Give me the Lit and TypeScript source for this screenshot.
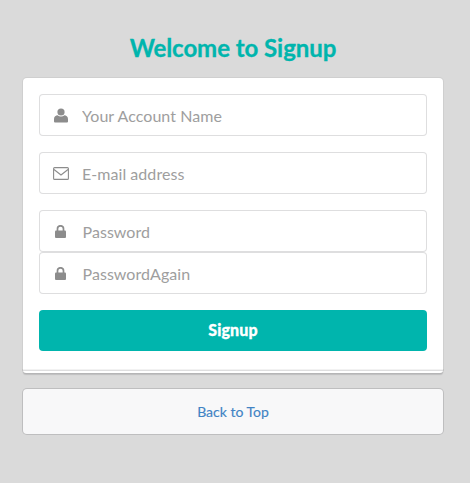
import { LitElement, html, css, svg } from "lit";
import { customElement } from "lit/decorators.js";

const userIcon = svg`<svg class="icon" viewBox="0 0 14 15" width="14" height="15"><circle cx="7" cy="4" r="3.6" fill="#8c8c8c"/><path d="M1 14.5 a1 1 0 0 1-1-1 V11 c0-2.6 2-3.8 3.6-3.8 C4.6 8 5.7 8.400 7 8.400 S9.400 8 10.400 7.200 C12 7.200 14 8.400 14 11 V13.500 a1 1 0 0 1-1 1Z" fill="#8c8c8c"/></svg>`;
const mailIcon = svg`<svg class="icon" viewBox="0 0 16 13" width="16" height="13"><rect x="0.6" y="0.6" width="14.800" height="11.800" rx="1" fill="none" stroke="#8c8c8c" stroke-width="1.100"/><path d="M1 2.500 L8 8 L15 2.500" fill="none" stroke="#8c8c8c" stroke-width="1.100"/></svg>`;
const lockIcon = svg`<svg class="icon" viewBox="0 0 11 13" width="11" height="13"><path d="M2.500 6 V3.800 a3 3 0 0 1 6 0 V6" fill="none" stroke="#8c8c8c" stroke-width="1.700"/><rect x="0" y="5.500" width="11" height="7.500" rx="1" fill="#8c8c8c"/></svg>`;

@customElement("app-root")
export class AppRoot extends LitElement {
  static styles = css`
    :host {
      display: block;
      height: 483px;
      background: #dadada;
      font-family: Lato, "Liberation Sans", sans-serif;
      box-sizing: border-box;
      padding: 32px 27px 0 23px;
    }
    h2 {
      margin: 0 0 14px;
      height: 32px;
      line-height: 32px;
      font-size: 24px;
      font-weight: 700;
      text-align: center;
      letter-spacing: -0.05px;
      color: #00b5ad;
      -webkit-text-stroke: 0.3px #00b5ad;
    }
    .card {
      position: relative;
      background: #fff;
      border-radius: 4px 4px 0 0;
      padding: 16px;
      height: 292px;
      box-sizing: border-box;
      box-shadow: 0 0 0 1px rgba(34, 36, 38, 0.06);
      display: flex;
      flex-direction: column;
    }
    .card::after {
      content: "";
      position: absolute;
      left: 0;
      right: 0;
      top: 100%;
      height: 3px;
      background: #fff;
      border-top: 1px solid rgba(34, 36, 38, 0.15);
      box-shadow: 0 2px 1px 0 rgba(34, 36, 38, 0.15), 0 0 0 1px rgba(34, 36, 38, 0.06);
      border-radius: 0 0 4px 4px;
      box-sizing: border-box;
    }
    form {
      display: flex;
      flex-direction: column;
      margin: 0;
    }
    .field {
      display: flex;
      align-items: center;
      height: 42px;
      box-sizing: border-box;
      border: 1px solid rgba(34, 36, 38, 0.15);
      border-radius: 4px;
      background: #fff;
    }
    .gap {
      margin-bottom: 16px;
    }
    .ico {
      flex: none;
      width: 41px;
      margin-right: 1px;
      display: flex;
      justify-content: center;
      align-items: center;
    }
    .icon {
      display: block;
    }
    input {
      flex: 1;
      min-width: 0;
      border: 0;
      outline: 0;
      background: transparent;
      padding: 0;
      font-family: inherit;
      font-size: 16px;
      letter-spacing: 0.05px;
      color: #333;
    }
    input.pw {
      padding-left: 0.5px;
    }
    input::placeholder {
      color: #9e9e9e;
      opacity: 1;
    }
    button {
      margin-top: 16px;
      height: 41px;
      border: 0;
      border-radius: 4px;
      background: #00b5ad;
      color: #fff;
      font-family: inherit;
      font-size: 16px;
      font-weight: 900;
      letter-spacing: 0.1px;
      -webkit-text-stroke: 0.3px #fff;
      padding: 0 0 2px;
    }
    .message {
      margin-top: 19px;
      height: 45px;
      box-sizing: border-box;
      display: flex;
      justify-content: center;
      align-items: center;
      background: #f8f8f9;
      border-radius: 4px;
      box-shadow: 0 0 0 1px rgba(34, 36, 38, 0.15);
      font-size: 14px;
    }
    a {
      color: #4183c4;
      text-decoration: none;
      -webkit-text-stroke: 0.15px #4183c4;
    }
  `;

  render() {
    return html`
      <h2>Welcome to Signup</h2>
      <div class="card">
        <form @submit=${(e: Event) => e.preventDefault()}>
          <div class="field gap">
            <span class="ico">${userIcon}</span>
            <input type="text" placeholder="Your Account Name" />
          </div>
          <div class="field gap">
            <span class="ico">${mailIcon}</span>
            <input type="text" placeholder="E-mail address" />
          </div>
          <div class="field">
            <span class="ico">${lockIcon}</span>
            <input class="pw" type="password" placeholder="Password" />
          </div>
          <div class="field">
            <span class="ico">${lockIcon}</span>
            <input class="pw" type="password" placeholder="PasswordAgain" />
          </div>
          <button type="submit">Signup</button>
        </form>
      </div>
      <div class="message"><a href="#">Back to Top</a></div>
    `;
  }
}
